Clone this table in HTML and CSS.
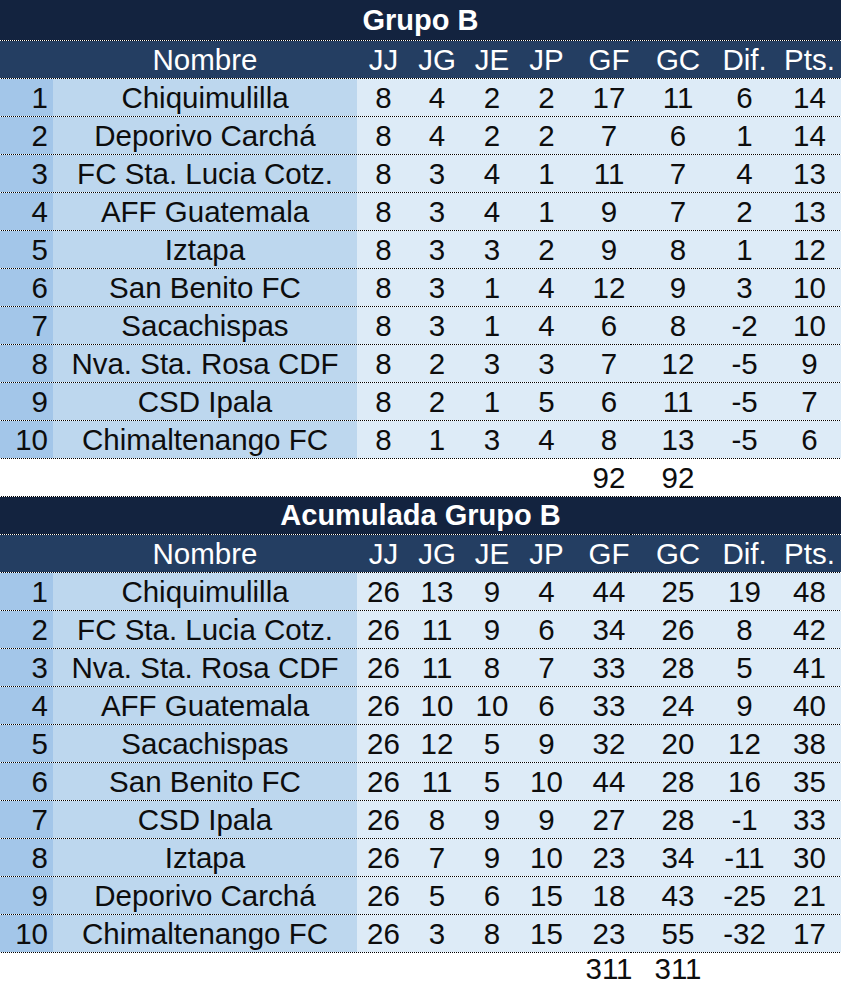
FILE: index.html
```html
<!DOCTYPE html>
<html lang="es">
<head>
<meta charset="utf-8">
<title>Grupo B</title>
<link rel="stylesheet" href="styles.css">
</head>
<body>
<section class="standings">
  <div class="row title-row first"><div class="title">Grupo B</div></div>
  <div class="row head-row">
    <div></div><div>Nombre</div><div>JJ</div><div>JG</div><div>JE</div><div>JP</div><div>GF</div><div>GC</div><div>Dif.</div><div>Pts.</div>
  </div>
  <div class="row data"><div class="pos">1</div><div class="name">Chiquimulilla</div><div>8</div><div>4</div><div>2</div><div>2</div><div>17</div><div>11</div><div>6</div><div>14</div></div>
  <div class="row data"><div class="pos">2</div><div class="name">Deporivo Carchá</div><div>8</div><div>4</div><div>2</div><div>2</div><div>7</div><div>6</div><div>1</div><div>14</div></div>
  <div class="row data"><div class="pos">3</div><div class="name">FC Sta. Lucia Cotz.</div><div>8</div><div>3</div><div>4</div><div>1</div><div>11</div><div>7</div><div>4</div><div>13</div></div>
  <div class="row data"><div class="pos">4</div><div class="name">AFF Guatemala</div><div>8</div><div>3</div><div>4</div><div>1</div><div>9</div><div>7</div><div>2</div><div>13</div></div>
  <div class="row data"><div class="pos">5</div><div class="name">Iztapa</div><div>8</div><div>3</div><div>3</div><div>2</div><div>9</div><div>8</div><div>1</div><div>12</div></div>
  <div class="row data"><div class="pos">6</div><div class="name">San Benito FC</div><div>8</div><div>3</div><div>1</div><div>4</div><div>12</div><div>9</div><div>3</div><div>10</div></div>
  <div class="row data"><div class="pos">7</div><div class="name">Sacachispas</div><div>8</div><div>3</div><div>1</div><div>4</div><div>6</div><div>8</div><div>-2</div><div>10</div></div>
  <div class="row data"><div class="pos">8</div><div class="name">Nva. Sta. Rosa CDF</div><div>8</div><div>2</div><div>3</div><div>3</div><div>7</div><div>12</div><div>-5</div><div>9</div></div>
  <div class="row data"><div class="pos">9</div><div class="name">CSD Ipala</div><div>8</div><div>2</div><div>1</div><div>5</div><div>6</div><div>11</div><div>-5</div><div>7</div></div>
  <div class="row data"><div class="pos">10</div><div class="name">Chimaltenango FC</div><div>8</div><div>1</div><div>3</div><div>4</div><div>8</div><div>13</div><div>-5</div><div>6</div></div>
  <div class="row totals"><div></div><div></div><div></div><div></div><div></div><div></div><div>92</div><div>92</div><div></div><div></div></div>
</section>
<section class="standings">
  <div class="row title-row"><div class="title">Acumulada Grupo B</div></div>
  <div class="row head-row">
    <div></div><div>Nombre</div><div>JJ</div><div>JG</div><div>JE</div><div>JP</div><div>GF</div><div>GC</div><div>Dif.</div><div>Pts.</div>
  </div>
  <div class="row data"><div class="pos">1</div><div class="name">Chiquimulilla</div><div>26</div><div>13</div><div>9</div><div>4</div><div>44</div><div>25</div><div>19</div><div>48</div></div>
  <div class="row data"><div class="pos">2</div><div class="name">FC Sta. Lucia Cotz.</div><div>26</div><div>11</div><div>9</div><div>6</div><div>34</div><div>26</div><div>8</div><div>42</div></div>
  <div class="row data"><div class="pos">3</div><div class="name">Nva. Sta. Rosa CDF</div><div>26</div><div>11</div><div>8</div><div>7</div><div>33</div><div>28</div><div>5</div><div>41</div></div>
  <div class="row data"><div class="pos">4</div><div class="name">AFF Guatemala</div><div>26</div><div>10</div><div>10</div><div>6</div><div>33</div><div>24</div><div>9</div><div>40</div></div>
  <div class="row data"><div class="pos">5</div><div class="name">Sacachispas</div><div>26</div><div>12</div><div>5</div><div>9</div><div>32</div><div>20</div><div>12</div><div>38</div></div>
  <div class="row data"><div class="pos">6</div><div class="name">San Benito FC</div><div>26</div><div>11</div><div>5</div><div>10</div><div>44</div><div>28</div><div>16</div><div>35</div></div>
  <div class="row data"><div class="pos">7</div><div class="name">CSD Ipala</div><div>26</div><div>8</div><div>9</div><div>9</div><div>27</div><div>28</div><div>-1</div><div>33</div></div>
  <div class="row data"><div class="pos">8</div><div class="name">Iztapa</div><div>26</div><div>7</div><div>9</div><div>10</div><div>23</div><div>34</div><div>-11</div><div>30</div></div>
  <div class="row data"><div class="pos">9</div><div class="name">Deporivo Carchá</div><div>26</div><div>5</div><div>6</div><div>15</div><div>18</div><div>43</div><div>-25</div><div>21</div></div>
  <div class="row data"><div class="pos">10</div><div class="name">Chimaltenango FC</div><div>26</div><div>3</div><div>8</div><div>15</div><div>23</div><div>55</div><div>-32</div><div>17</div></div>
  <div class="row totals last"><div></div><div></div><div></div><div></div><div></div><div></div><div>311</div><div>311</div><div></div><div></div></div>
</section>
</body>
</html>
```

FILE: styles.css
```css
html, body {
  margin: 0;
  padding: 0;
  background: #ffffff;
}

body {
  width: 841px;
  font-family: "Liberation Sans", Arial, sans-serif;
  color: #0d0d0d;
}

.standings {
  display: flex;
  flex-direction: column;
}

.row {
  display: grid;
  grid-template-columns: 53px 304px 53px 54px 56px 53px 72px 66px 67px 63px;
  grid-template-rows: 37px;
  height: 37px;
  border-bottom: 1px solid #000;
  border-image: repeating-linear-gradient(to right, #000 0 1px, #ffffff 1px 2px) 1;
  font-size: 29.5px;
  line-height: 37px;
}

.row > div {
  text-align: center;
  white-space: nowrap;
}

.title-row {
  display: flex;
  justify-content: center;
  background: #13233f;
}

.title-row.first {
  height: 40px;
  line-height: 41px;
}

.title {
  color: #ffffff;
  font-weight: bold;
  font-size: 29px;
}

.head-row {
  background: #243e62;
  color: #ffffff;
}

.data > div {
  background: #ddebf7;
}

.data > .pos {
  background: #a3c6e9;
  text-align: right;
  padding-right: 5px;
}

.data > .name {
  background: #bdd7ee;
}

.totals {
  background: #ffffff;
}

.totals.last {
  height: 32px;
  grid-template-rows: 32px;
  line-height: 32px;
  border-bottom: none;
}
```
